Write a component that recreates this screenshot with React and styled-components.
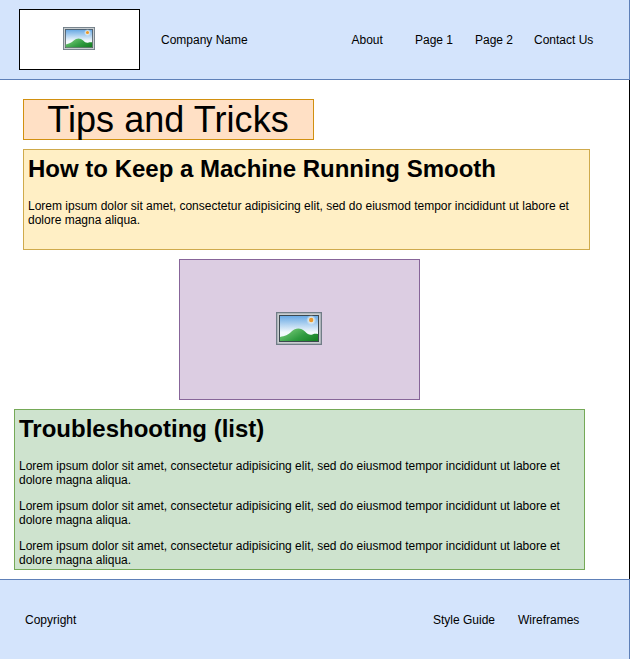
import React, { useId } from "react";
import styled, { createGlobalStyle } from "styled-components";

const GlobalStyle = createGlobalStyle`
  * { box-sizing: border-box; }
  body {
    margin: 0;
    background: #fff;
    color: #000;
    font-family: "Liberation Sans", Helvetica, Arial, sans-serif;
    font-size: 12px;
    line-height: 14px;
    overflow: hidden;
  }
`;

const Page = styled.div`
  display: flex;
  flex-direction: column;
  width: 630px;
  height: 659px;
`;

const Header = styled.header`
  display: flex;
  align-items: center;
  height: 80px;
  padding: 0 35px 0 19px;
  background: #d4e4fc;
  border-right: 1px solid #5e80b8;
  border-bottom: 1px solid #5e80b8;
`;

const Logo = styled.div`
  display: flex;
  align-items: center;
  justify-content: center;
  width: 121px;
  height: 61px;
  margin-right: 21px;
  padding: 0 1px 2px 0;
  background: #fff;
  border: 1px solid #000;
`;

const Label = styled.span`
  flex: none;
  width: ${(p) => p.$width}px;
  white-space: nowrap;
`;

const Nav = styled.nav`
  display: flex;
  margin-left: auto;
`;

const Main = styled.main`
  display: flex;
  flex-direction: column;
  align-items: flex-start;
  gap: 9px;
  height: 499px;
  padding: 19px 0 0 14px;
  border-right: 1px solid #000;
`;

const Title = styled.h1`
  width: 291px;
  height: 41px;
  margin: 0 0 0 9px;
  padding-right: 1px;
  background: #ffe0c5;
  border: 1px solid #d19010;
  font-size: 36px;
  font-weight: 400;
  line-height: 40px;
  letter-spacing: 0.06px;
  text-align: center;
  white-space: nowrap;
`;

const Panel = styled.section`
  width: ${(p) => p.$width}px;
  height: ${(p) => p.$height}px;
  margin-left: ${(p) => p.$indent || 0}px;
  padding: 5px 4px 0;
  background: ${(p) => p.$fill};
  border: 1px solid ${(p) => p.$line};
`;

const Picture = styled(Panel)`
  display: flex;
  align-items: center;
  justify-content: center;
  padding: 0 1px 2px 0;
`;

const Heading = styled.h2`
  margin: 0 0 17px;
  font-size: 24px;
  font-weight: 700;
  line-height: 27px;
  white-space: nowrap;
`;

const Paragraph = styled.p`
  margin: 0 0 12px;
`;

const Footer = styled.footer`
  display: flex;
  align-items: center;
  height: 80px;
  padding: 0 49px 0 25px;
  background: #d4e4fc;
  border-top: 1px solid #5e80b8;
  border-right: 1px solid #5e80b8;
`;

const Landscape = ({ width, height }) => {
  const id = useId();
  return (
    <svg width={width} height={height} viewBox="0 0 46 33" preserveAspectRatio="none">
      <defs>
        <linearGradient id={`${id}sky`} x1="0" y1="0" x2="0" y2="1">
          <stop offset="0" stopColor="#69a9e4" />
          <stop offset="0.65" stopColor="#f3f9fc" />
        </linearGradient>
        <linearGradient id={`${id}hill`} x1="0" y1="0.2" x2="1" y2="0.8">
          <stop offset="0" stopColor="#7bce7b" />
          <stop offset="0.6" stopColor="#2f9b40" />
          <stop offset="1" stopColor="#178225" />
        </linearGradient>
        <radialGradient id={`${id}glow`}>
          <stop offset="0.4" stopColor="#fff6dc" stopOpacity="0.9" />
          <stop offset="1" stopColor="#fff" stopOpacity="0" />
        </radialGradient>
      </defs>
      <rect width="46" height="33" fill="#717d87" />
      <rect x="1.3" y="1.3" width="43.4" height="30.4" fill="#c9ced0" />
      <rect x="3" y="3" width="40" height="27" fill="#3c474f" />
      <rect x="4" y="4" width="38" height="25" fill={`url(#${id}sky)`} />
      <circle cx="35.2" cy="8" r="5" fill={`url(#${id}glow)`} />
      <circle cx="35.2" cy="8" r="2.2" fill="#e8972c" />
      <path
        d="M4 25C9 24 12 23 15.5 19.5C19.5 15.5 25 15.5 29 19.5C32 22.5 34 23.5 37 22.2C39 21.5 40.5 22 42 22V29H4Z"
        fill={`url(#${id}hill)`}
      />
    </svg>
  );
};

const lorem =
  "Lorem ipsum dolor sit amet, consectetur adipisicing elit, sed do eiusmod tempor incididunt ut labore et dolore magna aliqua.";

const navLinks = [
  ["About", 63.5],
  ["Page 1", 60],
  ["Page 2", 59],
  ["Contact Us", 60],
];

export default function App() {
  return (
    <Page>
      <GlobalStyle />
      <Header>
        <Logo>
          <Landscape width={32} height={23} />
        </Logo>
        <Label>Company Name</Label>
        <Nav>
          {navLinks.map(([name, width]) => (
            <Label key={name} $width={width}>{name}</Label>
          ))}
        </Nav>
      </Header>
      <Main>
        <Title>Tips and Tricks</Title>
        <Panel $width={567} $height={101} $indent={9} $fill="#ffefc5" $line="#cfaa4c">
          <Heading>How to Keep a Machine Running Smooth</Heading>
          <Paragraph>{lorem}</Paragraph>
        </Panel>
        <Picture $width={241} $height={141} $indent={165} $fill="#dccde2" $line="#876599">
          <Landscape width={46} height={33} />
        </Picture>
        <Panel $width={571} $height={161} $fill="#cee3ce" $line="#75a957">
          <Heading>Troubleshooting (list)</Heading>
          {[1, 2, 3].map((item) => (
            <Paragraph key={item}>{lorem}</Paragraph>
          ))}
        </Panel>
      </Main>
      <Footer>
        <Label>Copyright</Label>
        <Nav>
          <Label $width={85}>Style Guide</Label>
          <Label $width={62}>Wireframes</Label>
        </Nav>
      </Footer>
    </Page>
  );
}
